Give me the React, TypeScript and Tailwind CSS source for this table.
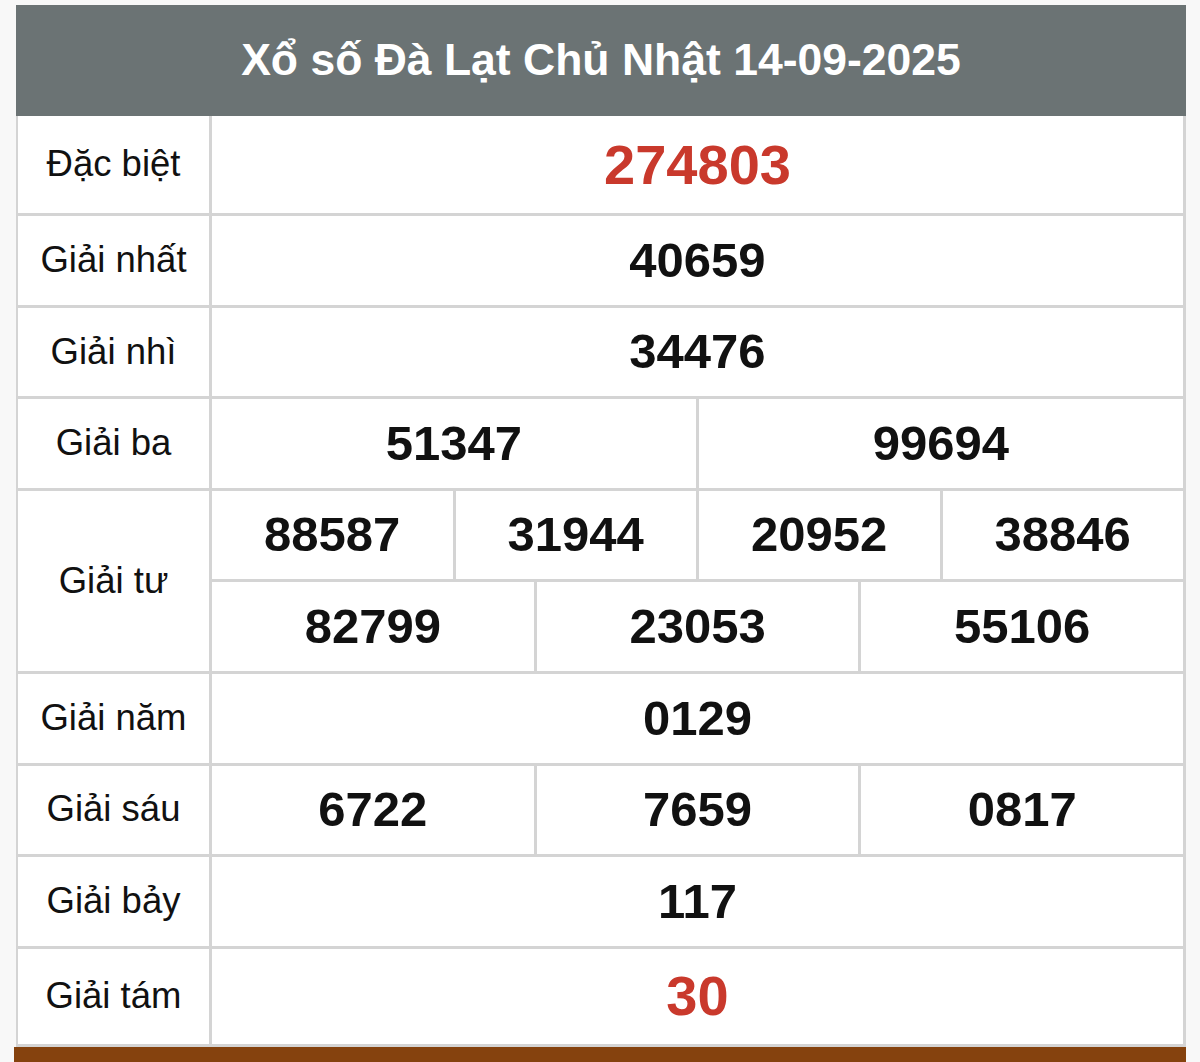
const font = { fontFamily: '"Liberation Sans", Arial, sans-serif' };

type Row = { label: string; lines: string[][]; red?: boolean; tall?: string };

const rows: Row[] = [
  { label: "Đặc biệt", lines: [["274803"]], red: true, tall: "h-[97px]" },
  { label: "Giải nhất", lines: [["40659"]] },
  { label: "Giải nhì", lines: [["34476"]] },
  { label: "Giải ba", lines: [["51347", "99694"]] },
  { label: "Giải tư", lines: [["88587", "31944", "20952", "38846"], ["82799", "23053", "55106"]] },
  { label: "Giải năm", lines: [["0129"]] },
  { label: "Giải sáu", lines: [["6722", "7659", "0817"]] },
  { label: "Giải bảy", lines: [["117"]] },
  { label: "Giải tám", lines: [["30"]], red: true, tall: "h-[95px]" },
];

function Cells({ nums, red, last, tall }: { nums: string[]; red?: boolean; last: boolean; tall?: string }) {
  const h = tall ? tall : last ? "h-[88.6px]" : "h-[91.6px] border-b-[3px] border-[#d4d4d4]";
  return (
    <div className={`flex ${h}`}>
      {nums.map((n, i) => (
        <div
          key={n}
          className={`flex-1 basis-0 flex items-center justify-center font-bold ${
            red ? "text-[56px] text-[#c9392c]" : "text-[49px] text-[#111111]"
          } ${i > 0 ? "border-l-[3px] border-[#d4d4d4]" : ""}`}
        >
          {n}
        </div>
      ))}
    </div>
  );
}

export default function App() {
  return (
    <div className="w-[1200px] h-[1062px] bg-[#f8f8f8] pt-[5px] pl-[16px] overflow-hidden" style={font}>
      <div className="w-[1170px]">
        <div className="h-[111px] bg-[#6b7374] flex items-center justify-center text-white font-bold text-[44.5px]">
          Xổ số Đà Lạt Chủ Nhật 14-09-2025
        </div>
        <div className="bg-white border-l-2 border-r-[3px] border-[#d4d4d4]">
          {rows.map((r) => (
            <div key={r.label} className="flex border-b-[3px] border-[#d4d4d4]">
              <div className="w-[194px] shrink-0 border-r-[3px] border-[#d4d4d4] flex items-center justify-center text-[36.5px] text-[#111111]">
                {r.label}
              </div>
              <div className="flex-1 flex flex-col">
                {r.lines.map((nums, li) => (
                  <Cells
                    key={li}
                    nums={nums}
                    red={r.red}
                    tall={r.tall}
                    last={li === r.lines.length - 1}
                  />
                ))}
              </div>
            </div>
          ))}
        </div>
        <div className="h-[20px] bg-[#85420e] -ml-[2px] w-[1172px]" />
      </div>
    </div>
  );
}
